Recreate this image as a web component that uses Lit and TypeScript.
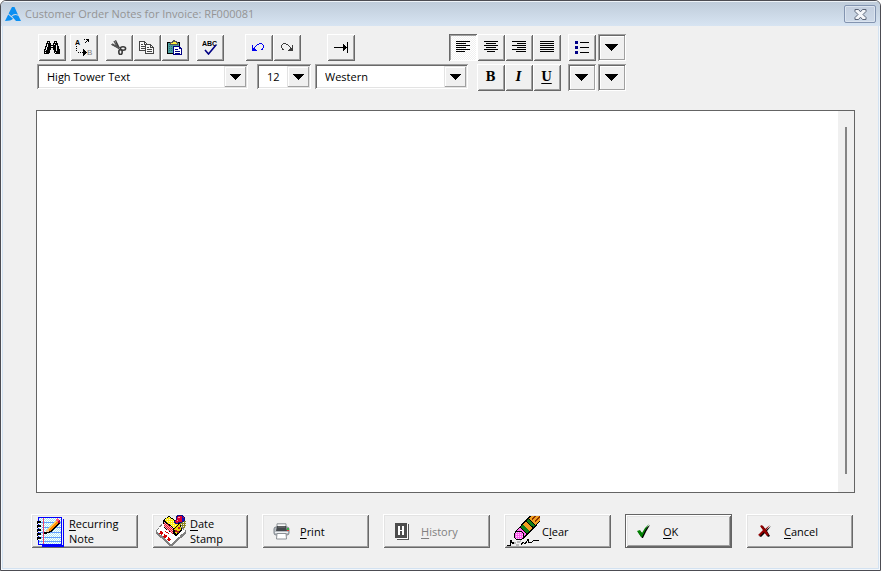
import { LitElement, html, css, svg, nothing } from "lit";
import { customElement, property } from "lit/decorators.js";

/** Turns rows of characters into crisp one-unit squares; "." is transparent. */
const pixels = (rows: string[], palette: Record<string, string>, x0 = 0, y0 = 0) =>
  Object.entries(palette).map(([key, color]) => {
    let d = "";
    rows.forEach((row, y) => {
      for (const m of row.matchAll(new RegExp(`${key}+`, "g"))) {
        d += `M${x0 + m.index!} ${y0 + y}h${m[0].length}v1h-${m[0].length}z`;
      }
    });
    return svg`<path d=${d} fill=${color}/>`;
  });

const icon = (w: number, h: number, body: unknown, smooth = false) => html`
  <svg width=${w} height=${h} viewBox="0 0 ${w} ${h}" aria-hidden="true"
    shape-rendering=${smooth ? "auto" : "crispEdges"}>${body}</svg>`;

const bars = (list: [number, number][]) =>
  icon(16, 12, svg`<path stroke="#000" fill="none"
    d=${list.map(([x, w], i) => `M${x} ${i * 2 + 0.5}h${w}`).join("")}/>`);

const K = { K: "#000" };

const icons = {
  logo: icon(16, 14, svg`<path fill="#0a8ff2" d="M7 0H9.500L13 7.800Q8.800 5.800 6.400 9L3.600 6.500ZM3.200 7.400 8 11.800Q6 14 0 14ZM7 9.600Q9.500 6.800 13.400 8.800L16 14H11Z"/>`, true),
  close: icon(13, 11, svg`
    <path d="M1 .5H4.500L6.500 2.800 8.500.5H12V2.500L9 5.500 12 8.500V10.500H8.500L6.500 8.200 4.500 10.500H1V8.500L4 5.500 1 2.500Z" fill="#f4f6fa" stroke="#5b6477"/>`, true),
  find: icon(16, 13, pixels([
    "...KKK....KKK...",
    "...K.K....K.K...",
    "..KKKKK..KKKKK..",
    "..K.KKK..K.KKK..",
    "..K.KKKKKKKK.K..",
    ".KK.KKK..KKK.KK.",
    ".K.KKKKKKKKK.KK.",
    ".K.KKKK..KKK.KK.",
    "KK.KKKK..KKK.KKK",
    "K.KKKK....KK.KKK",
    "KKKKKK....KKKKKK",
    "K.KKKK....K.KKKK",
    "KKKKK......KKKKK",
  ], K)),
  replace: icon(18, 17, svg`
    <text x="0" y="6" font-family="Liberation Sans" font-weight="700" font-size="7" fill="#000">A</text>
    <text x="12" y="16" font-family="Liberation Sans" font-weight="400" font-size="8" fill="#808080">B</text>
    ${pixels([
      ".........K.KKK....",
      "............KK....",
      "...........K.K....",
      "..........K.......",
      "..................",
      "..................",
      "..................",
      ".K................",
      "..................",
      ".K................",
      "........K.........",
      ".K......KK........",
      "........KKK.......",
      "...K.K.KKKKK......",
      "........KKK.......",
      "........KK........",
      "........K.........",
    ], K)}`),
  cut: icon(16, 15, svg`
    <path d="M4 .5 5 0 9 8 7 9ZM.5 5 0 4 9 7 8 9Z" fill="#3a3a3a"/>
    <path d="M3 1 7 8M1 4 8 8" stroke="#555" stroke-width="1.500"/>
    <ellipse cx="12" cy="8.500" rx="2.600" ry="1.700" fill="none" stroke="#3a3a3a" stroke-width="1.600"/>
    <ellipse cx="9.500" cy="12" rx="1.700" ry="2.500" fill="none" stroke="#3a3a3a" stroke-width="1.600"/>`, true),
  copy: icon(16, 13, svg`
    <path d="M.5.5h5l3 3v6h-8z" fill="#f8f8f8" stroke="#444"/>
    <path d="M5.500.5v3h3M2 3.500h2M2 5.500h4M2 7.500h4" stroke="#444" fill="none"/>
    <path d="M6.500 3.500h5l3 3v6h-8z" fill="#f8f8f8" stroke="#444"/>
    <path d="M11.500 3.500v3h3M8 6.500h2M8 8.500h5M8 10.500h5" stroke="#444" fill="none"/>`),
  paste: icon(17, 15, svg`
    <path d="M1.500 2.500h12v10.500h-12z" fill="#4d9d9d" stroke="#000"/>
    <path d="M3 4.500h9M3 6.500h9M3 8.500h5M3 10.500h5" stroke="#2c7777" stroke-dasharray="1 1"/>
    <path d="M4.500 2.500h1.500v-1h1.500v-1h1v1h1.500v1h1.500v2h-7z" fill="#ffef3a" stroke="#555"/>
    <path d="M7.500 6.500h6l2 2v6h-8z" fill="#fff" stroke="#000084"/>
    <path d="M13.500 6.500v2h2M9 9.500h3M9 11.500h5M9 13h5" stroke="#000084" fill="none"/>`),
  spell: icon(16, 15, svg`
    <text x="0" y="6" font-family="Liberation Sans" font-size="7" font-weight="700" fill="#000">ABC</text>
    <path d="M3 10 6.500 14 14 5" fill="none" stroke="#000084" stroke-width="1.600"/>`, true),
  undo: icon(13, 8, pixels([
    ".......KKK...",
    ".....KK...K..",
    "K...K......K.",
    "K..K.......K.",
    "K.K........K.",
    "KKK.......K..",
    "KKKK.....KK..",
    "KKKKK........",
  ], { K: "#0000f0" })),
  redo: icon(13, 8, pixels([
    "...KKK.......",
    "..K...KK.....",
    ".K......K...K",
    ".K.......K..K",
    ".K........K.K",
    "..K.......KKK",
    "..KK.....KKKK",
    "........KKKKK",
  ], { K: "#3c3c3c" })),
  tab: icon(14, 11, pixels([
    ".............K",
    ".............K",
    ".........K...K",
    ".........KK..K",
    ".........KKK.K",
    "KKKKKKKKKKKKKK",
    ".........KKK.K",
    ".........KK..K",
    ".........K...K",
    ".............K",
    ".............K",
  ], K)),
  left: bars([[1, 14], [1, 10], [1, 14], [1, 10], [1, 14], [1, 9]]),
  center: bars([[1, 14], [3, 10], [1, 14], [3, 10], [1, 14], [4, 8]]),
  right: bars([[1, 14], [6, 9], [1, 14], [6, 9], [1, 14], [5, 10]]),
  justify: bars([[1, 14], [1, 14], [1, 14], [1, 14], [1, 14], [1, 14]]),
  bullets: icon(14, 13, svg`
    <path d="M0 0h3v3H0zM0 5h3v3H0zM0 10h3v3H0z" fill="#000084"/>
    <path d="M5 1h9v1H5zM5 6h9v1H5zM5 11h9v1H5z"/>`),
  arrow: icon(11, 6, pixels([
    "KKKKKKKKKKK", ".KKKKKKKKK.", "..KKKKKKK..", "...KKKKK...", "....KKK....", ".....K.....",
  ], K)),
  wideArrow: icon(13, 7, pixels([
    "KKKKKKKKKKKKK", ".KKKKKKKKKKK.", "..KKKKKKKKK..", "...KKKKKKK...", "....KKKKK....", ".....KKK.....", "......K......",
  ], K)),
  notepad: icon(30, 31, svg`
    <defs><pattern id="ruled" width="2" height="2" patternUnits="userSpaceOnUse">
      <rect width="2" height="2" fill="#fff"/><path d="M0 0h1v1H0zM1 1h1v1H1z" fill="#a8e4f4"/></pattern></defs>
    <path d="M5 5h22v24h2v2H7z" fill="#0000ff"/><path d="M28 3h1v26h-1z" fill="#0000ff"/>
    <path d="M3 1h24v28H3z" fill="#0000ff"/>
    <path d="M4 2h22v26H4z" fill="url(#ruled)"/>
    <path d="M4 6.500h22M4 11.500h22M4 16.500h22M4 21.500h22M4 25.500h22" stroke="#5f9dff"/>
    <path d="M8.500 2v26" stroke="#f04070"/>
    <path d="M2 6h4M2 10h4M2 14h4M2 18h4M2 22h4" stroke="#000" stroke-width="2"/>
    <path d="M3 7.500h4M3 11.500h4M3 15.500h4M3 19.500h4M3 23.500h4" stroke="#fff"/>
    <path d="M2 7.500h1M2 11.500h1M2 15.500h1M2 19.500h1M2 23.500h1" stroke="#000"/>
    <path d="M10 18 12 13 21 4 25 7 16 16Z" fill="#000"/>
    <path d="M12 13 21 5 22 6 13 14Z" fill="#ffd060"/>
    <path d="M13 14 22 6 24 7 15 15Z" fill="#ff8a00"/>
    <path d="M20 4 22 2 25 4 23 7Z" fill="#ff6080"/><path d="M24 4h1v3h-2z" fill="#b00030"/>
    <path d="M10 17 12 13 15 15Z" fill="#f5c890"/><path d="M9 16h2v2H9z"/>`),
  stamp: icon(33, 32, svg`
    <defs>
      <pattern id="gold" width="2" height="2" patternUnits="userSpaceOnUse">
        <rect width="2" height="2" fill="#ffec10"/><path d="M0 0h1v1H0z" fill="#fffbc0"/></pattern>
      <pattern id="brick" width="2" height="2" patternUnits="userSpaceOnUse">
        <rect width="2" height="2" fill="#e0102c"/><path d="M0 0h1v1H0zM1 1h1v1H1z" fill="#ffb0b8"/></pattern>
      <pattern id="olive" width="2" height="2" patternUnits="userSpaceOnUse">
        <path d="M0 0h1v1H0zM1 1h1v1H1zM1 0h1v1H1z" fill="#8a8420"/></pattern>
    </defs>
    <path d="M25 6h6v5l-3 5h-4z" fill="url(#olive)"/>
    <path d="M1 16 14 2 31 16 16 30Z" fill="#fff" stroke="#808080" stroke-dasharray="4 1"/>
    <path d="M1 17 15 30h2L31 17" fill="none" stroke="#808080" stroke-width="2"/>
    <path d="M5 17 16 26" stroke="#d80000" stroke-width="3" stroke-dasharray="3 2"/>
    <path d="M10 16 14 19" stroke="#d80000" stroke-dasharray="1 1"/>
    <path d="M8 5 14 1 25 8 27 15 21 21 9 13Z" fill="#000"/>
    <path d="M9 5 14 2 24 9 19 13Z" fill="url(#gold)"/>
    <path d="M9 7 18 13V19L9 12Z" fill="url(#brick)"/>
    <path d="M19 14 25 9 26 15 21 19Z" fill="#f0d400"/>
    <path d="M20 14.500h2v2h-2zM23 12h2v2h-2zM22 16h2v2h-2z" fill="#b02020"/>
    <path d="M19 7 22 4 21 2 24 0H27L29 2V6L27 7H24L22 9Z" fill="#e00030" stroke="#101080"/>
    <path d="M27 1h1v2h1v3h-2z" fill="#1010c0"/><path d="M23 2h2v1h-2zM22 5h1v1h-1z" fill="#ff9ab0"/>`),
  printer: icon(17, 17, svg`
    <path d="M4 .8h9V6H4z" fill="#fafafa" stroke="#8b9095"/>
    <rect x="1" y="4" width="15" height="8" rx="2" fill="#b8bdc2" stroke="#7e858c"/>
    <path d="M4 3h9l1 5H3z" fill="#45494d"/><path d="M5 4h7" stroke="#777"/>
    <path d="M2 9.500h13" stroke="#eef0f2"/>
    <path d="M4 10.500h9l.5 5.500h-10z" fill="#fff" stroke="#8b9095"/>
    <path d="M14 5h2v2h-2z" fill="#38b449"/><path d="M14 7h2v1h-2z" fill="#e23c2e"/>`, true),
  history: icon(15, 17, svg`
    <path d="M2 1h12v15H2z" fill="#fff"/><path d="M13.500 1v15.500H2" fill="none" stroke="#555"/>
    <path d="M0 0h12v15H0z" fill="#4d4d4d"/>
    <path d="M3 3h2v9H3zM7 3h2v9H7zM5 7h2v1H5z" fill="#fff"/>`),
  eraser: icon(34, 31, svg`
    <defs>
      <pattern id="rubber" width="2" height="2" patternUnits="userSpaceOnUse">
        <rect width="2" height="2" fill="#ff60f0"/><path d="M0 0h1v1H0z" fill="#ffd8ff"/></pattern>
    </defs>
    <g transform="translate(13 19) rotate(-46)">
      <path d="M0-5.500H30V6H0z" fill="#000"/>
      <path d="M2-4.500H6V5H2z" fill="#ff70f0"/>
      <path d="M7-4.500H10V5H7z" fill="#108018"/>
      <path d="M10.500-4.500H14.500V5H10.500z" fill="#f0a020"/>
      <path d="M15.500-4.500H18V5H15.500z" fill="#108018"/>
      <path d="M19-4.500H30V5H19z" fill="#f0a020"/>
      <path d="M20-1.500H30M21 2H30" stroke="#8a3000" stroke-width="1.200"/>
    </g>
    <circle cx="13" cy="19.500" r="4.500" fill="url(#rubber)" stroke="#000"/>
    <path d="M1 29.500h3v-5h1v2h2v1h-1" fill="none" stroke="#000"/>
    <path d="M8 26h2v2H8zM11 25h3v2h-3zM10 28h3v2h-3zM14 24h1v2h-1z" fill="#bbb"/>
    <path d="M15 28.500 17 26.500 19 28 22 23.500 23 27 25 26.500 28 24.500H33" fill="none" stroke="#000"/>`),
  ok: icon(14, 14, svg`
    <path d="M1 8 3 7 6 10Q8 4 13 1Q9 7 6 14H5Z" fill="#000"/>
    <path d="M0 7 3 6 5 9Q7 4 12 0Q8 6 5 13H4Z" fill="#008000"/>`, true),
  cancel: icon(14, 12, svg`
    <path d="M3 2 5 1 8 5 13 1 9 6 12 11 10 12 7 8 3 12 1 11 6 6Z" fill="#000"/>
    <path d="M2 1 4 0 7 4 12 0 8 5 11 10 9 11 6 7 2 11 0 10 5 5Z" fill="#930000"/>`, true),
};

@customElement("tool-button")
class ToolButton extends LitElement {
  @property() label = "";
  @property({ type: Boolean }) pressed = false;
  @property({ type: Boolean }) menu = false;

  static styles = css`
    :host { display: block; }
    button {
      display: grid; place-items: center; box-sizing: border-box;
      width: 28px; height: 27px; padding: 0 1px 1px 0; border: 0;
      background: #f0f0f0; color: #000;
      font: bold 12px/16px "DejaVu Serif", "Liberation Serif", serif;
      box-shadow: inset 1px 1px #fff, inset -1px -1px #696969, inset 2px 2px #f0f0f0, inset -2px -2px #a0a0a0;
    }
    .pressed {
      background: repeating-conic-gradient(#fff 0 25%, #f0f0f0 0 50%) 0 0 / 2px 2px;
      box-shadow: inset 1px 1px #696969, inset -1px -1px #fff, inset 2px 2px #a0a0a0;
    }
    .menu {
      box-shadow: inset 1px 1px #a0a0a0, inset -1px -1px #fff, inset 2px 2px #696969,
        inset -2px -2px #a0a0a0, inset 3px 3px #fff;
    }
  `;

  render() {
    return html`<button type="button"
      class=${this.pressed ? "pressed" : this.menu ? "menu" : ""}
      aria-label=${this.label} aria-pressed=${this.pressed ? "true" : nothing}
      aria-haspopup=${this.menu ? "menu" : nothing}><slot></slot></button>`;
  }
}

@customElement("app-root")
class AppRoot extends LitElement {
  static styles = css`
    :host {
      display: flex; flex-direction: column; box-sizing: border-box; min-height: 100vh;
      border: 1px solid #4c4c52; border-radius: 6px 6px 0 0; overflow: hidden;
      background: #f0f0f0; color: #000;
      font: 11px/15px "Open Sans", "Noto Sans", sans-serif;
      box-shadow: inset 0 0 0 1px #f4f8fc, inset 0 0 0 2px #d3e2f1;
    }
    svg { display: block; flex: none; }
    .titlebar {
      display: flex; align-items: center; gap: 4px; height: 25px; padding: 0 4px;
      background: linear-gradient(#bfccda, #d7e4f2); border-top: 1px solid #eef3f8;
      box-sizing: border-box;
    }
    h1 { flex: 1; margin: 0; padding-bottom: 2px; font-size: 11px; font-weight: 400; line-height: 15px; color: #949494; }
    .close {
      display: grid; place-items: center; width: 32px; height: 18px; padding: 0;
      border: 1px solid #8394b0; border-radius: 2px; background: linear-gradient(#c4cfdf, #cdd9e8);
      box-shadow: inset 0 0 0 1px #dbe4ef;
    }
    .toolbar { display: flex; flex-direction: column; gap: 3px; padding: 8px 36px 0; }
    .row { display: flex; height: 27px; }
    .tools { padding-left: 1px; }
    .group { display: flex; margin-right: 7px; }
    .snug { margin-right: 4px; }
    .wide { margin-right: 21px; }
    .wider { margin-right: 26px; }
    .tabs { margin-right: 94px; }
    .menus { gap: 2px; }
    .combo {
      display: flex; box-sizing: border-box; height: 25px; padding: 2px; margin-right: 9px; background: #fff;
      box-shadow: inset 1px 1px #a0a0a0, inset -1px -1px #fff, inset 2px 2px #696969, inset -2px -2px #e3e3e3;
    }
    .font { width: 211px; }
    .size { width: 54px; margin-right: 4px; }
    .script { width: 153px; }
    .combo select {
      flex: 1; min-width: 0; appearance: none; border: 0; outline: 0; background: none;
      padding: 0 0 0 8px; font: inherit; color: inherit;
    }
    .drop {
      display: grid; place-items: center; width: 22px; box-sizing: border-box; background: #f0f0f0;
      pointer-events: none;
      box-shadow: inset 1px 1px #e3e3e3, inset -1px -1px #a0a0a0, inset 2px 2px #fff;
    }
    main {
      flex: 1; display: flex; min-height: 120px; margin: 19px 25px 0 35px;
      border: 1px solid #646464; background: #fff;
    }
    textarea { flex: 1; border: 0; outline: 0; resize: none; padding: 8px; font: 16px "Liberation Serif", serif; }
    .scroll { display: flex; justify-content: center; width: 16px; padding: 16px 0 18px; background: #f0f0f0; }
    .thumb { width: 2px; background: #858585; }
    footer { display: flex; align-items: flex-start; flex-wrap: wrap; gap: 14px; padding: 21px 14px 22px 30px; }
    .action {
      display: flex; align-items: center; box-sizing: border-box; width: 107px; height: 34px; padding: 0;
      border: 0; background: #f0f0f0; color: #000; font: inherit; text-align: left;
      box-shadow: inset 1px 1px #fff, inset -1px -1px #696969, inset 2px 2px #e3e3e3, inset -2px -2px #a0a0a0;
    }
    .narrow { width: 96px; }
    .action:disabled { color: #808080; }
    .default {
      box-shadow: inset 0 0 0 1px #646464, inset 2px 2px #fff, inset -2px -2px #696969,
        inset 3px 3px #e3e3e3, inset -3px -3px #a0a0a0;
    }
    .glyph { display: grid; place-items: center; width: 38px; height: 34px; flex: none; }
    u { text-underline-offset: 2px; }
  `;

  private combo(cls: string, label: string, value: string) {
    return html`<div class="combo ${cls}">
      <select aria-label=${label}><option>${value}</option></select>
      <span class="drop">${icons.arrow}</span>
    </div>`;
  }

  private action(glyph: unknown, text: unknown, cls = "", disabled = false) {
    return html`<button type="button" class="action ${cls}" ?disabled=${disabled}>
      <span class="glyph">${glyph}</span><span>${text}</span>
    </button>`;
  }

  render() {
    return html`
      <header class="titlebar">
        ${icons.logo}
        <h1>Customer Order Notes for Invoice: RF000081</h1>
        <button class="close" type="button" aria-label="Close">${icons.close}</button>
      </header>

      <div class="toolbar" role="toolbar" aria-label="Formatting">
        <div class="row tools">
          <div class="group snug"><tool-button label="Find">${icons.find}</tool-button></div>
          <div class="group"><tool-button label="Replace">${icons.replace}</tool-button></div>
          <div class="group">
            <tool-button label="Cut">${icons.cut}</tool-button>
            <tool-button label="Copy">${icons.copy}</tool-button>
            <tool-button label="Paste">${icons.paste}</tool-button>
          </div>
          <div class="group wide"><tool-button label="Spelling">${icons.spell}</tool-button></div>
          <div class="group wider">
            <tool-button label="Undo">${icons.undo}</tool-button>
            <tool-button label="Redo">${icons.redo}</tool-button>
          </div>
          <div class="group tabs"><tool-button label="Tab">${icons.tab}</tool-button></div>
          <div class="group">
            <tool-button label="Align left" pressed>${icons.left}</tool-button>
            <tool-button label="Center">${icons.center}</tool-button>
            <tool-button label="Align right">${icons.right}</tool-button>
            <tool-button label="Justify">${icons.justify}</tool-button>
          </div>
          <div class="group menus">
            <tool-button label="Bullets">${icons.bullets}</tool-button>
            <tool-button label="Bullet style" menu>${icons.wideArrow}</tool-button>
          </div>
        </div>
        <div class="row">
          ${this.combo("font", "Font", "High Tower Text")}
          ${this.combo("size", "Font size", "12")}
          ${this.combo("script", "Script", "Western")}
          <div class="group">
            <tool-button label="Bold">B</tool-button>
            <tool-button label="Italic"><i>I</i></tool-button>
            <tool-button label="Underline"><u>U</u></tool-button>
          </div>
          <div class="group menus">
            <tool-button label="Text color" menu>${icons.wideArrow}</tool-button>
            <tool-button label="Highlight color" menu>${icons.wideArrow}</tool-button>
          </div>
        </div>
      </div>

      <main>
        <textarea aria-label="Notes"></textarea>
        <div class="scroll"><div class="thumb"></div></div>
      </main>

      <footer>
        ${this.action(icons.notepad, html`<u>R</u>ecurring<br>Note`)}
        ${this.action(icons.stamp, html`<u>D</u>ate<br>Stamp`, "narrow")}
        ${this.action(icons.printer, html`<u>P</u>rint`)}
        ${this.action(icons.history, html`<u>H</u>istory`, "", true)}
        ${this.action(icons.eraser, html`C<u>l</u>ear`)}
        ${this.action(icons.ok, html`<u>O</u>K`, "default")}
        ${this.action(icons.cancel, html`<u>C</u>ancel`)}
      </footer>
    `;
  }
}
